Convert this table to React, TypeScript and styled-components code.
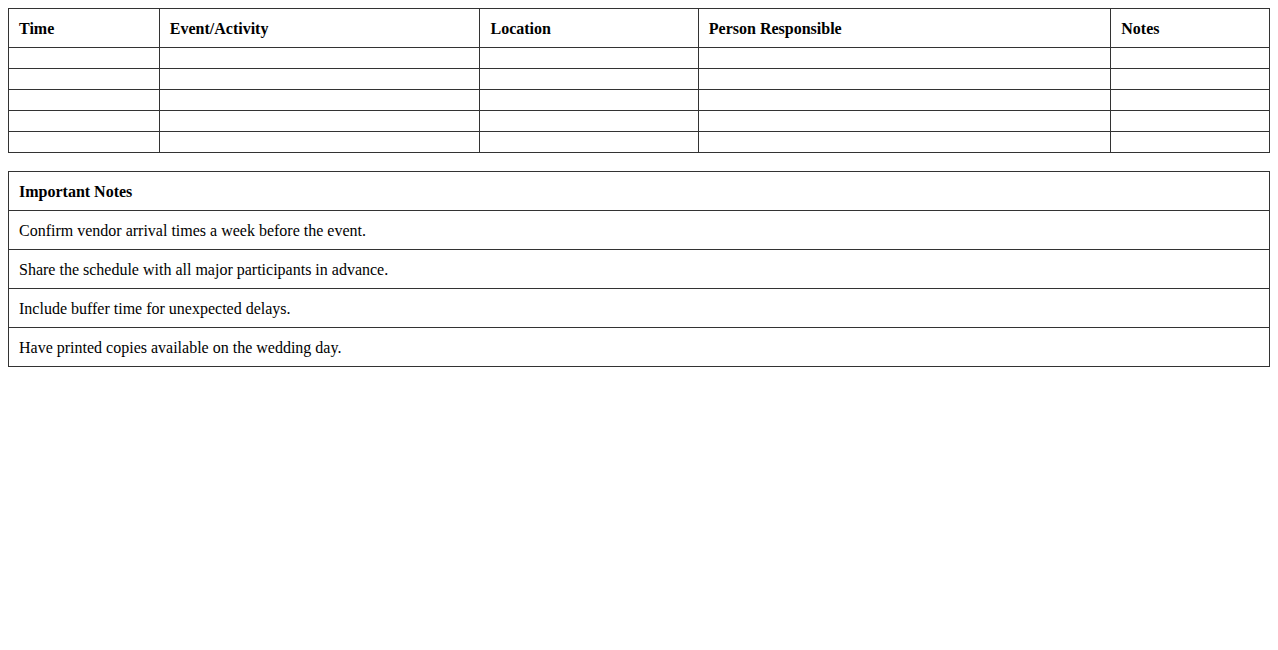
import React from 'react';
import styled, { createGlobalStyle } from 'styled-components';

const GlobalStyle = createGlobalStyle`
  body {
    margin: 8px;
    background: #ffffff;
    color: #000000;
    font-family: "Liberation Serif", "Times New Roman", serif;
    font-size: 16px;
  }
`

const Table = styled.table`
  width: 100%;
  border-collapse: collapse;
  margin-bottom: 18px;
`

// text sits a pixel lower than the default metrics give
const Th = styled.th`
  border: 1px solid #333333;
  padding: 11px 10px 9px;
  text-align: left;
  font-weight: bold;
`

const Td = styled.td`
  border: 1px solid #333333;
  padding: 11px 10px 9px;
  text-align: left;
`

const columns = ['Time', 'Event/Activity', 'Location', 'Person Responsible', 'Notes']

const notes = [
  'Confirm vendor arrival times a week before the event.',
  'Share the schedule with all major participants in advance.',
  'Include buffer time for unexpected delays.',
  'Have printed copies available on the wedding day.',
]

export default function App() {
  return (
    <>
      <GlobalStyle />
      <Table>
        <thead>
          <tr>
            {columns.map(c => <Th key={c}>{c}</Th>)}
          </tr>
        </thead>
        <tbody>
          {[0, 1, 2, 3, 4].map(r => (
            <tr key={r}>
              {columns.map(c => <Td key={c}></Td>)}
            </tr>
          ))}
        </tbody>
      </Table>
      <Table>
        <thead>
          <tr>
            <Th>Important Notes</Th>
          </tr>
        </thead>
        <tbody>
          {notes.map(n => (
            <tr key={n}>
              <Td>{n}</Td>
            </tr>
          ))}
        </tbody>
      </Table>
    </>
  );
}
